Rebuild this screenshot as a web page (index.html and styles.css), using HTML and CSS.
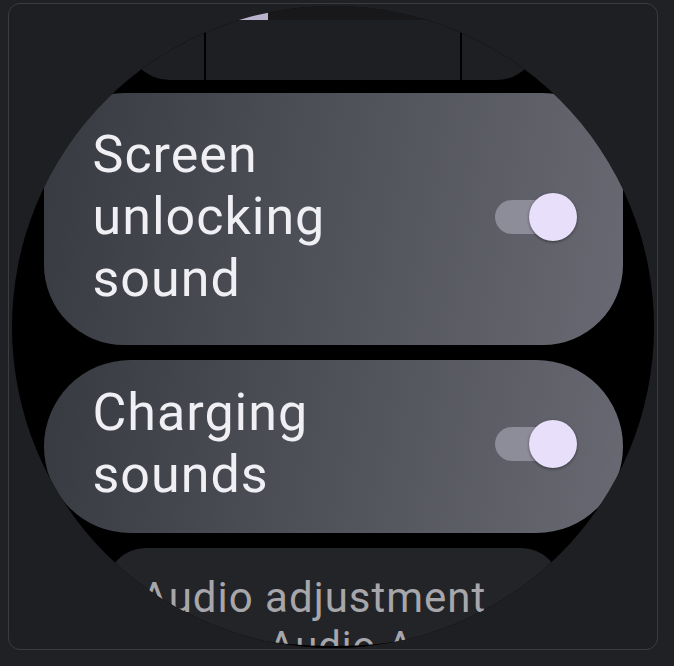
FILE: index.html
```html
<!DOCTYPE html>
<html>
  <head>
    <meta name="viewport" content="width=device-width,initial-scale=1">
    <title>Sounds</title>
    <link rel="stylesheet" href="styles.css">
  </head>
  <body>
    <div class="frame">
      <div class="watch">
        <div class="chip chip-top">
          <svg class="peek" width="414" height="20" viewBox="0 0 414 20">
            <path d="M107 14 Q204 -14 304 14 Z" fill="#18181a"/>
            <path d="M107 14 L142 4 L142 14 Z" fill="#b9b2cc"/>
          </svg>
          <div class="stub"></div>
        </div>

        <div class="chip chip-toggle chip-tall">
          <span class="label">Screen<br>unlocking<br>sound</span>
          <div class="switch">
            <div class="track"></div>
            <div class="thumb"></div>
          </div>
        </div>

        <div class="chip chip-toggle chip-short">
          <span class="label">Charging<br>sounds</span>
          <div class="switch">
            <div class="track"></div>
            <div class="thumb"></div>
          </div>
        </div>

        <div class="chip chip-fade">
          <span class="label">Audio adjustment</span>
          <span class="sub">Audio, Audio Ace</span>
        </div>
      </div>
    </div>
  </body>
</html>
```

FILE: styles.css
```css
:root {
    --page: #202124;
    --frame: #1e1f22;
    --edge: #3b3c40;
    --text: #f0eff4;
    --muted: #a7a7ab;
    --track: #8d8c99;
    --thumb: #e8e0fb;
}

html, body {
    margin: 0;
    padding: 0;
}

body {
    background-color: var(--page);
    font-family: Roboto, "Liberation Sans", sans-serif;
}

.frame {
    box-sizing: border-box;
    width: 650px;
    height: 647px;
    margin: 3px 0 0 8px;
    padding: 2px 3px;
    border: 1px solid var(--edge);
    border-radius: 12px;
    background-color: var(--frame);
    overflow: hidden;
}

/* round watch face, everything inside is clipped to it */
.watch {
    width: 642px;
    height: 642px;
    border-radius: 50%;
    background-color: #000;
    overflow: hidden;
    display: flex;
    flex-direction: column;
    align-items: center;
}

.chip {
    box-sizing: border-box;
    flex-shrink: 0;
}

.chip-top {
    width: 414px;
    height: 74px;
    border-radius: 0 0 44px 44px;
    background-color: var(--frame);
    display: flex;
    flex-direction: column;
    align-items: center;
    justify-content: space-between;
}

.peek {
    display: block;
}

.stub {
    box-sizing: border-box;
    width: 258px;
    height: 50px;
    border-left: 2px solid #000;
    border-right: 2px solid #000;
}

.chip-toggle {
    width: 579px;
    display: flex;
    align-items: center;
    justify-content: space-between;
    background: linear-gradient(100deg, #383a41, #686972);
    color: var(--text);
    font-size: 52px;
    line-height: 62px;
    letter-spacing: 1px;
}

.chip-tall {
    margin-top: 13px;
    padding: 31px 46px 35px 49px;
    border-radius: 80px;
}

.chip-short {
    margin-top: 15px;
    padding: 22px 46px 27px 49px;
    border-radius: 87px;
}

.switch {
    display: flex;
    align-items: center;
}

.track {
    width: 66px;
    height: 34px;
    border-radius: 17px;
    background-color: var(--track);
}

.thumb {
    width: 48px;
    height: 48px;
    margin-left: -32px;
    border-radius: 50%;
    background-color: var(--thumb);
    box-shadow: 0 1px 3px rgba(0, 0, 0, 0.45);
}

.chip-fade {
    margin-top: 15px;
    width: 455px;
    height: 110px;
    padding: 25px 35px;
    border-radius: 40px 40px 0 0;
    background-color: #232428;
    color: var(--muted);
    font-size: 42px;
    line-height: 50px;
    letter-spacing: 1px;
    white-space: nowrap;
    display: flex;
    flex-direction: column;
    clip-path: ellipse(228px 104px at 50% -6px);
}

.chip-fade .sub {
    font-size: 40px;
    line-height: 48px;
}
```
